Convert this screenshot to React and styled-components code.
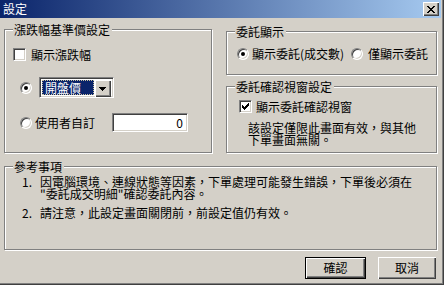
import React from "react";
import styled, { createGlobalStyle } from "styled-components";

const GlobalStyle = createGlobalStyle`
  html, body { margin: 0; padding: 0; background: #d4d0c8; }
  body {
    font-family: "Noto Sans CJK TC", "Noto Sans CJK SC", sans-serif;
    font-size: 12px;
    color: #000;
  }
`;

const Window = styled.div`
  width: 444px;
  height: 285px;
  box-sizing: border-box;
  background: #d4d0c8;
  box-shadow: inset -1px -1px 0 #404040, inset -2px -2px 0 #808080;
  display: flex;
  flex-direction: column;
  overflow: hidden;
`;

const TitleBar = styled.div`
  height: 18px;
  margin-right: 3px;
  background: linear-gradient(to right, #0a246a, #a6caf0);
  display: flex;
  align-items: center;
  justify-content: space-between;
  padding: 0 2px 0 2px;
  color: #fff;
  font-size: 12px;
  line-height: 18px;
`;

const TitleText = styled.span`
  padding-left: 1px;
`;

const CloseButton = styled.div`
  width: 16px;
  height: 14px;
  box-sizing: border-box;
  background: #d4d0c8;
  box-shadow: inset 1px 1px 0 #fff, inset -1px -1px 0 #404040, inset -2px -2px 0 #808080;
  display: flex;
  align-items: center;
  justify-content: center;
  padding-right: 1px;
`;

const Body = styled.div`
  padding: 11px 0 0 4px;
  display: flex;
  flex-direction: column;
`;

const TopRow = styled.div`
  display: flex;
  gap: 14px;
  align-items: flex-start;
`;

const RightColumn = styled.div`
  display: flex;
  flex-direction: column;
  gap: 11px;
  padding-top: 2px;
`;

const Group = styled.div`
  position: relative;
  box-sizing: border-box;
  width: ${(p) => p.$w}px;
  height: ${(p) => p.$h}px;
  border: 1px solid #808080;
  box-shadow: inset 1px 1px 0 #fff, 1px 1px 0 #fff;
  padding: ${(p) => p.$pad};
  margin-top: ${(p) => p.$mt || 0}px;
`;

const GroupTitle = styled.span`
  position: absolute;
  top: -7px;
  left: 8px;
  background: #d4d0c8;
  padding: 0 2px 0 1px;
  line-height: 13px;
  white-space: nowrap;
`;

const Row = styled.div`
  display: flex;
  align-items: center;
  gap: ${(p) => p.$gap || 0}px;
  margin-top: ${(p) => p.$mt || 0}px;
  padding-left: ${(p) => p.$pl || 0}px;
  line-height: 13px;
  white-space: nowrap;
`;

const Label = styled.span`
  display: inline-block;
  width: ${(p) => (p.$w ? `${p.$w}px` : "auto")};
  margin-left: ${(p) => p.$ml || 0}px;
  line-height: 13px;
`;

const CheckBox = styled.span`
  width: 13px;
  height: 13px;
  box-sizing: border-box;
  background: #fff;
  border: 1px solid;
  border-color: #808080 #fff #fff #808080;
  box-shadow: inset 1px 1px 0 #404040, inset -1px -1px 0 #d4d0c8;
  display: inline-flex;
  align-items: center;
  justify-content: center;
  flex-shrink: 0;
`;

const Radio = styled.span`
  width: 12px;
  height: 12px;
  border-radius: 50%;
  box-sizing: border-box;
  background: #fff;
  border: 1px solid;
  border-color: #808080 #fff #fff #808080;
  box-shadow: inset 1px 1px 0 #404040, inset -1px -1px 0 #d4d0c8;
  position: relative;
  flex-shrink: 0;
  margin-left: ${(p) => p.$ml || 0}px;
  &::after {
    content: "";
    display: ${(p) => (p.$checked ? "block" : "none")};
    position: absolute;
    left: 50%;
    top: 50%;
    width: 4px;
    height: 4px;
    margin: -2px 0 0 -2px;
    border-radius: 50%;
    background: #000;
  }
`;

const Combo = styled.div`
  width: 75px;
  height: 21px;
  box-sizing: border-box;
  background: #fff;
  border: 1px solid;
  border-color: #808080 #fff #fff #808080;
  box-shadow: inset 1px 1px 0 #404040, inset -1px -1px 0 #d4d0c8;
  padding: 2px;
  display: flex;
`;

const ComboValue = styled.div`
  flex: 1;
  box-sizing: border-box;
  margin: 0 1px 0 0;
  background: #0a246a;
  color: #fff;
  border: 1px dotted #c8c0a0;
  line-height: 13px;
  padding-left: 2px;
  white-space: nowrap;
`;

const DropButton = styled.div`
  width: 16px;
  height: 17px;
  box-sizing: border-box;
  background: #d4d0c8;
  box-shadow: inset 1px 1px 0 #fff, inset -1px -1px 0 #404040, inset -2px -2px 0 #808080;
  display: flex;
  align-items: center;
  justify-content: center;
  padding-right: 1px;
`;

const NumberInput = styled.input`
  width: 76px;
  height: 19px;
  box-sizing: border-box;
  margin: 0 0 0 17px;
  background: #fff;
  border: 1px solid;
  border-color: #808080 #fff #fff #808080;
  box-shadow: inset 1px 1px 0 #404040, inset -1px -1px 0 #d4d0c8;
  font: inherit;
  font-size: 12px;
  line-height: 15px;
  text-align: right;
  padding: 0 4px 0 2px;
  outline: none;
  color: #000;
`;

const Para = styled.div`
  margin-top: 9px;
  padding-left: 9px;
  line-height: 12px;
  white-space: nowrap;
`;

const NoteList = styled.div`
  display: flex;
  flex-direction: column;
  gap: 7px;
`;

const NoteItem = styled.div`
  display: grid;
  grid-template-columns: 18px auto;
  line-height: 12px;
  white-space: nowrap;
`;

const ButtonRow = styled.div`
  display: flex;
  justify-content: flex-end;
  gap: 12px;
  margin-top: 7px;
  padding-right: 8px;
`;

const Button = styled.button`
  width: ${(p) => p.$w}px;
  height: 22px;
  box-sizing: border-box;
  padding: 0;
  margin: 0;
  font: inherit;
  font-size: 12px;
  line-height: 20px;
  color: #000;
  background: #d4d0c8;
  border: ${(p) => (p.$default ? "1px solid #000" : "none")};
  box-shadow: inset 1px 1px 0 #fff, inset -1px -1px 0 #404040, inset -2px -2px 0 #808080;
`;

const CloseIcon = () => (
  <svg width="8" height="7" viewBox="0 0 8 7" shapeRendering="crispEdges">
    <path d="M0 0h2v1h-2zM6 0h2v1h-2zM1 1h2v1h-2zM5 1h2v1h-2zM2 2h4v1h-4zM3 3h2v1h-2zM2 4h4v1h-4zM1 5h2v1h-2zM5 5h2v1h-2zM0 6h2v1h-2zM6 6h2v1h-2z" fill="#000" />
  </svg>
);

const CheckMark = () => (
  <svg width="7" height="7" viewBox="0 0 7 7" shapeRendering="crispEdges">
    <path d="M6 0h1v3h-1zM5 1h1v3h-1zM4 2h1v3h-1zM3 3h1v3h-1zM2 4h1v3h-1zM1 3h1v3h-1zM0 2h1v3h-1z" fill="#000" />
  </svg>
);

const DownArrow = () => (
  <svg width="7" height="4" viewBox="0 0 7 4" shapeRendering="crispEdges">
    <path d="M0 0h7v1h-7zM1 1h5v1h-5zM2 2h3v1h-3zM3 3h1v1h-1z" fill="#000" />
  </svg>
);

export default function App() {
  return (
    <>
      <GlobalStyle />
      <Window>
        <TitleBar>
          <TitleText>設定</TitleText>
          <CloseButton>
            <CloseIcon />
          </CloseButton>
        </TitleBar>
        <Body>
          <TopRow>
            <Group $w={208} $h={124} $pad="18px 0 0 8px">
              <GroupTitle>漲跌幅基準價設定</GroupTitle>
              <Row $gap={5}>
                <CheckBox />
                <Label>顯示漲跌幅</Label>
              </Row>
              <Row $mt={16} $pl={7} $gap={7}>
                <Radio $checked />
                <Combo>
                  <ComboValue>開盤價</ComboValue>
                  <DropButton>
                    <DownArrow />
                  </DropButton>
                </Combo>
              </Row>
              <Row $mt={15} $pl={7}>
                <Radio />
                <Label $ml={3}>使用者自訂</Label>
                <NumberInput readOnly value="0" />
              </Row>
            </Group>
            <RightColumn>
              <Group $w={211} $h={44} $pad="15px 0 0 10px">
                <GroupTitle>委託顯示</GroupTitle>
                <Row>
                  <Radio $checked />
                  <Label $ml={3} $w={96}>顯示委託(成交數)</Label>
                  <Radio $ml={3} />
                  <Label $ml={5}>僅顯示委託</Label>
                </Row>
              </Group>
              <Group $w={211} $h={67} $pad="13px 0 0 12px">
                <GroupTitle>委託確認視窗設定</GroupTitle>
                <Row $gap={4}>
                  <CheckBox>
                    <CheckMark />
                  </CheckBox>
                  <Label>顯示委託確認視窗</Label>
                </Row>
                <Para>
                  該設定僅限此畫面有效，與其他
                  <br />
                  下單畫面無關。
                </Para>
              </Group>
            </RightColumn>
          </TopRow>
          <Group $w={433} $h={84} $mt={13} $pad="9px 0 0 17px">
            <GroupTitle>參考事項</GroupTitle>
            <NoteList>
              <NoteItem>
                <span>1.</span>
                <span>
                  因電腦環境、連線狀態等因素，下單處理可能發生錯誤，下單後必須在
                  <br />
                  "委託成交明細"確認委託內容。
                </span>
              </NoteItem>
              <NoteItem>
                <span>2.</span>
                <span>請注意，此設定畫面關閉前，前設定值仍有效。</span>
              </NoteItem>
            </NoteList>
          </Group>
          <ButtonRow>
            <Button $default $w={61}>確認</Button>
            <Button $w={58}>取消</Button>
          </ButtonRow>
        </Body>
      </Window>
    </>
  );
}
